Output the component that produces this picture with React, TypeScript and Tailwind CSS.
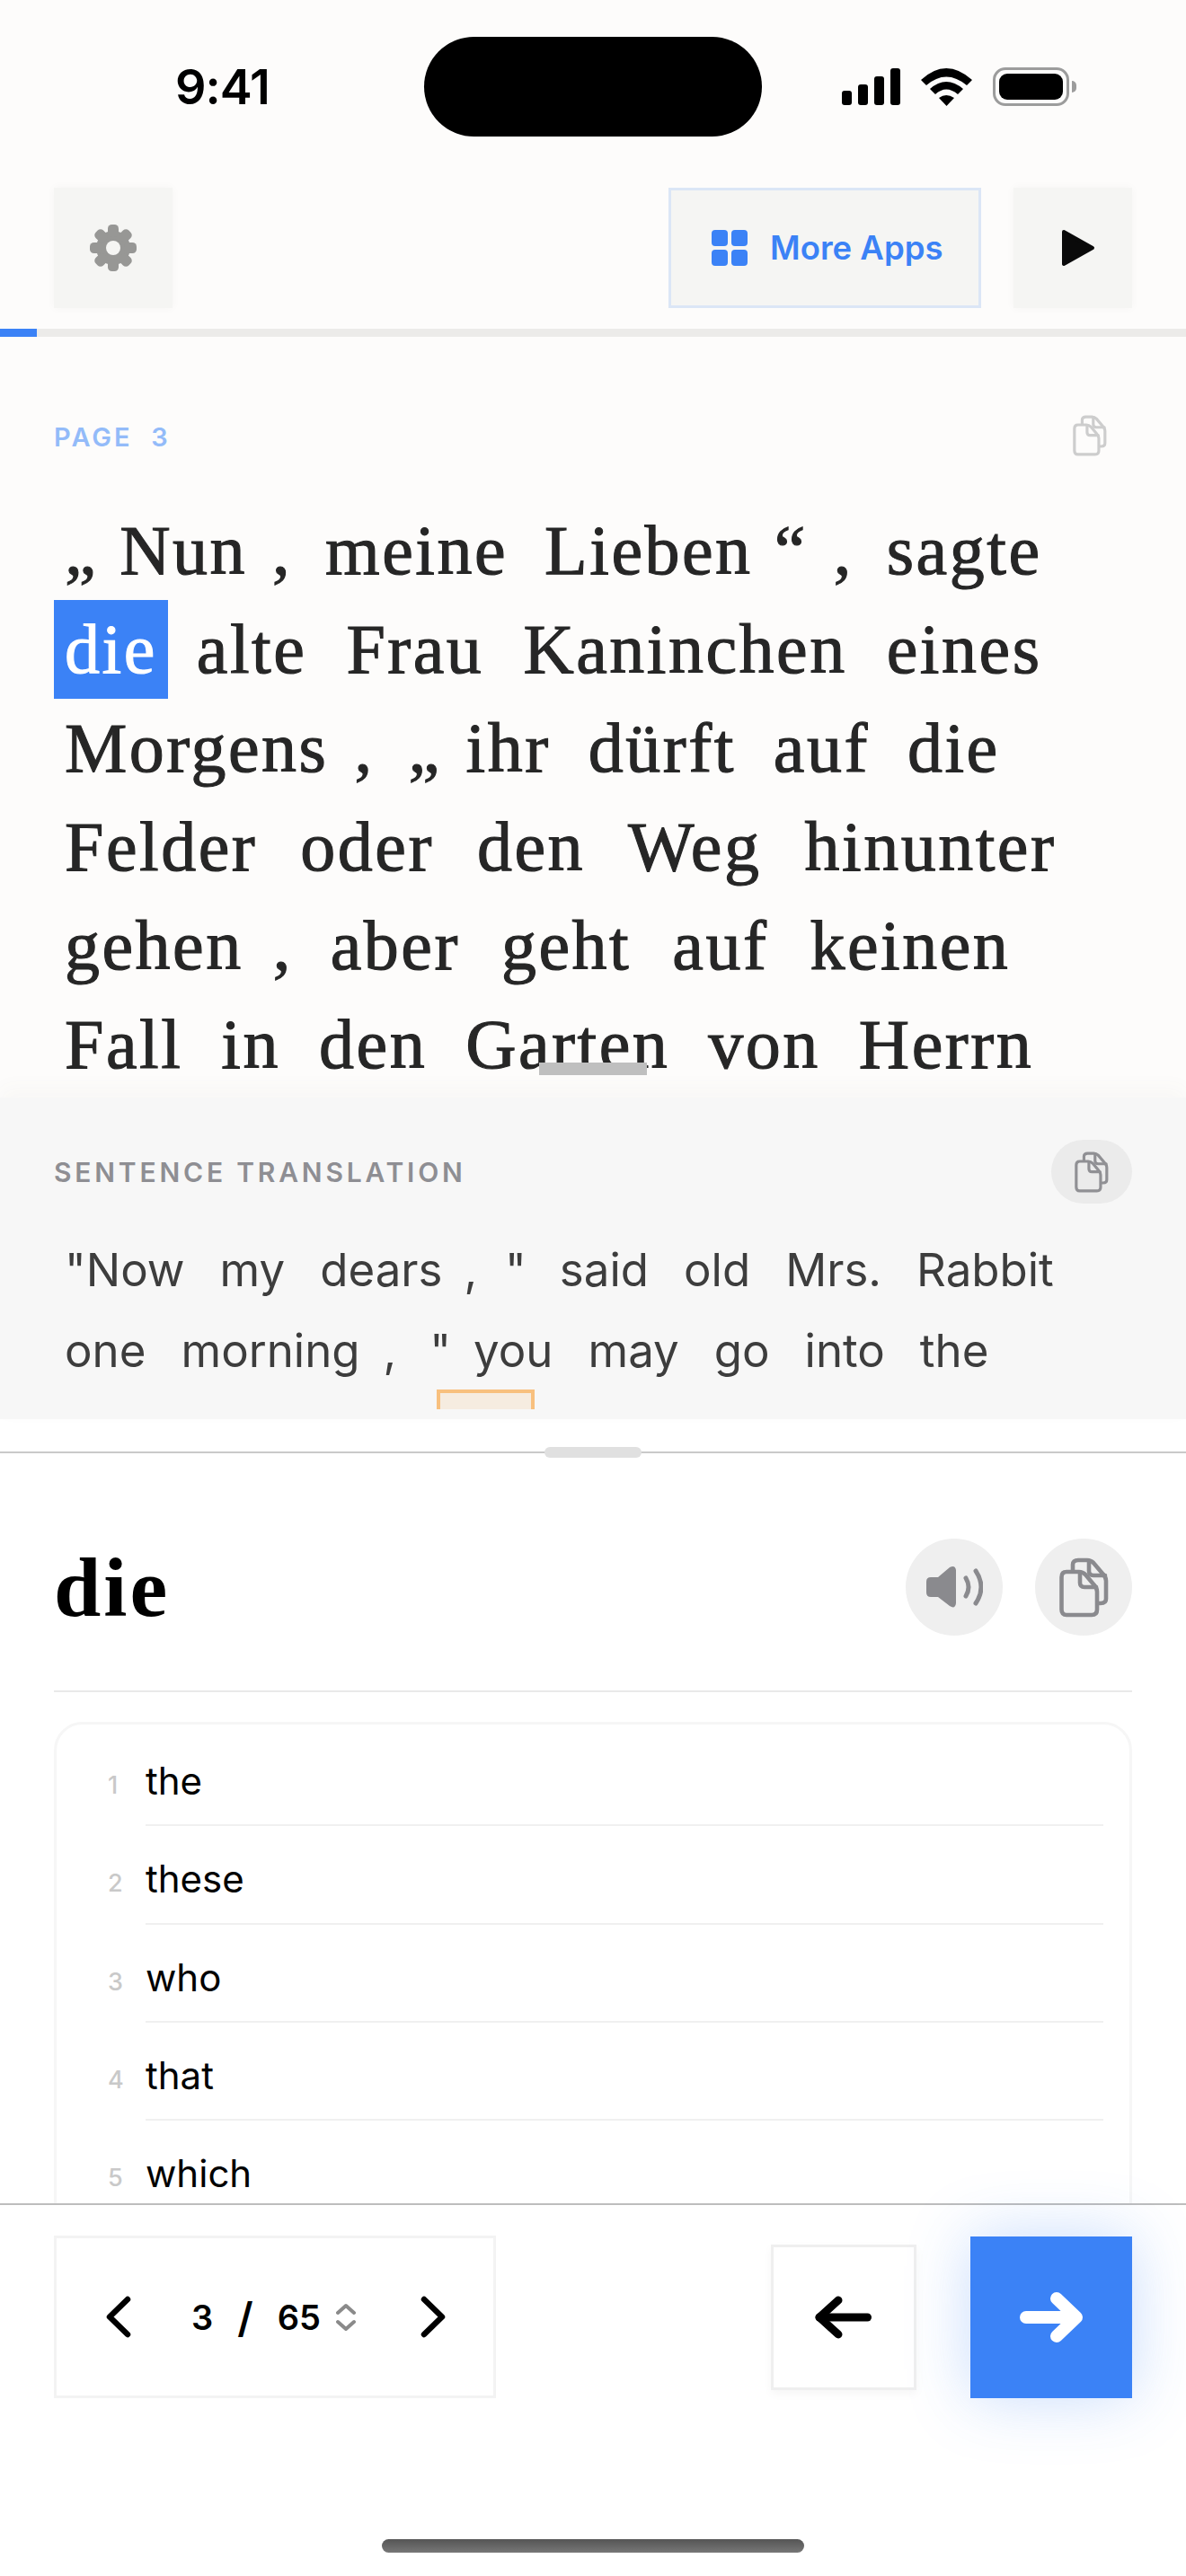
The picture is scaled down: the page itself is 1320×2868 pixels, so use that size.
type Token = { t: string; cls?: string };

const SERIF = 'font-["Liberation_Serif",serif]';
const COMMA = 'ml-[-13px] mr-[-4px]';

const germanLines: Token[][] = [
  [{ t: '„', cls: 'mr-[-17px]' }, { t: 'Nun' }, { t: ',', cls: COMMA }, { t: 'meine' }, { t: 'Lieben' }, { t: '“', cls: 'ml-[-17px] mr-[-12px]' }, { t: ',', cls: 'mr-[-4px]' }, { t: 'sagte' }],
  [{ t: 'die', cls: 'bg-[#3b82f6] text-white' }, { t: 'alte' }, { t: 'Frau' }, { t: 'Kaninchen' }, { t: 'eines' }],
  [{ t: 'Morgens' }, { t: ',', cls: COMMA }, { t: '„', cls: 'mr-[-15px]' }, { t: 'ihr' }, { t: 'dürft' }, { t: 'auf' }, { t: 'die' }],
  [{ t: 'Felder' }, { t: 'oder' }, { t: 'den' }, { t: 'Weg' }, { t: 'hinunter' }],
  [{ t: 'gehen' }, { t: ',', cls: COMMA }, { t: 'aber' }, { t: 'geht' }, { t: 'auf' }, { t: 'keinen' }],
  [{ t: 'Fall' }, { t: 'in' }, { t: 'den' }, { t: 'Garten' }, { t: 'von' }, { t: 'Herrn' }],
];

// word gaps differ per line, the source font is wider in some words
const lineGaps = ['gap-[17px]', 'gap-[20px]', 'gap-[18px]', 'gap-[24px]', 'gap-[22px]', 'gap-[19px]'];

const englishLines: Token[][] = [
  [{ t: '"Now' }, { t: 'my' }, { t: 'dears' }, { t: ',', cls: 'ml-[-15px]' }, { t: '"', cls: 'ml-[-8px]' }, { t: 'said', cls: 'ml-[-2px]' }, { t: 'old' }, { t: 'Mrs.' }, { t: 'Rabbit' }],
  [{ t: 'one' }, { t: 'morning' }, { t: ',', cls: 'ml-[-13px]' }, { t: '"', cls: 'ml-[-2px]' }, { t: 'you', cls: 'ml-[-14px]' }, { t: 'may' }, { t: 'go' }, { t: 'into' }, { t: 'the' }],
];

const meanings = ['the', 'these', 'who', 'that', 'which', 'those'];

function CopyIcon({ className }: { className?: string }) {
  return (
    <svg viewBox="0 0 55 67" fill="none" stroke="currentColor" strokeWidth="4.6" strokeLinejoin="round" strokeLinecap="round" className={className}>
      <path d="M8 16H22Q26 16 29 19L39 31Q42 34 42 38V58Q42 64 36 64H8Q2.5 64 2.5 58V22Q2.5 16 8 16Z" />
      <path d="M23 17V28Q23 33 28 33H41" />
      <path d="M15 15V8Q15 3 21 3H31Q35 3 38 6L49 19Q52 22 52 26V46Q52 51 46 51H43" />
      <path d="M33 4V15Q33 20 38 20H51" />
    </svg>
  );
}

function SpeakerIcon() {
  return (
    <svg viewBox="0 0 63 48" className="w-[63px] h-[48px] text-[#8a8a8e]">
      <path fill="currentColor" d="M5 13H13L26 2Q32-1 33 5V42Q32 49 26 45L13 35H5Q0 35 0 30V18Q0 13 5 13Z" />
      <path fill="none" stroke="currentColor" strokeWidth="5" strokeLinecap="round" d="M44 14Q50 24 44 34" />
      <path fill="none" stroke="currentColor" strokeWidth="5" strokeLinecap="round" d="M55 6Q67 24 55 42" />
    </svg>
  );
}

function GearIcon() {
  return (
    <svg viewBox="0 0 52 52" className="w-[52px] h-[52px]">
      <g fill="#979795">
        <circle cx="26" cy="26" r="19" />
        {[0, 45, 90, 135, 180, 225, 270, 315].map((deg) => (
          <rect key={deg} x="20" y="0" width="12" height="14" rx="4.5" transform={`rotate(${deg} 26 26)`} />
        ))}
      </g>
      <circle cx="26" cy="26" r="8" fill="#f5f5f3" />
    </svg>
  );
}

function StatusBar() {
  return (
    <div className="h-[193px] flex items-center">
      <div className="w-[472px] pl-[195px] font-['Inter',sans-serif] font-semibold text-[54px] leading-none tracking-[-1px] text-black">9:41</div>
      <div className="w-[376px] h-[111px] rounded-full bg-black" />
      <div className="flex items-center pl-[89px]">
        <div className="flex items-end gap-[7px] h-[41px]">
          <div className="w-[11px] h-[16px] rounded-[3px] bg-black" />
          <div className="w-[11px] h-[23px] rounded-[3px] bg-black" />
          <div className="w-[11px] h-[32px] rounded-[3px] bg-black" />
          <div className="w-[11px] h-[41px] rounded-[3px] bg-black" />
        </div>
        <svg viewBox="0 0 57 42" className="w-[57px] h-[42px] ml-[23px]">
          <path d="M0 13Q28-13 57 13L51 19Q28 0 6 19Z" />
          <path d="M10 23Q28 7 47 23L41 29Q28 18 16 29Z" />
          <path d="M20 33Q28 27 37 33L28.5 42Z" />
        </svg>
        <div className="ml-[23px] w-[85px] h-[43px] rounded-[14px] border-[3px] border-[#9c9c9c] p-[4px]">
          <div className="w-full h-full rounded-[9px] bg-black" />
        </div>
        <div className="ml-[3px] w-[5px] h-[13px] rounded-r-full bg-[#9c9c9c]" />
      </div>
    </div>
  );
}

function Toolbar() {
  const soft = 'h-[134px] flex items-center justify-center bg-[#f5f5f3] shadow-[0_0_10px_rgba(0,0,0,0.035)]';
  return (
    <div className="pt-[16px] pb-[23px] px-[60px] flex justify-between">
      <div className={`${soft} w-[132px]`}>
        <GearIcon />
      </div>
      <div className="flex gap-[36px]">
        <div className="w-[348px] h-[134px] flex items-center pl-[45px] gap-[25px] bg-[#f5f5f3] border-[3px] border-[#dbe6f6]">
          <svg viewBox="0 0 40 40" className="w-[40px] h-[40px] text-[#3b82f6]" fill="currentColor">
            <rect x="0" y="0" width="18" height="18" rx="4" />
            <rect x="22" y="0" width="18" height="18" rx="4" />
            <rect x="0" y="22" width="18" height="18" rx="4" />
            <rect x="22" y="22" width="18" height="18" rx="4" />
          </svg>
          <span className="font-['Inter',sans-serif] font-semibold text-[36.5px] leading-none text-[#3b82f6]">More Apps</span>
        </div>
        <div className={`${soft} w-[132px]`}>
          <svg viewBox="0 0 38 42" className="ml-[12px] w-[38px] h-[42px]">
            <path fill="#0a0a0a" stroke="#0a0a0a" strokeWidth="4" strokeLinejoin="round" d="M3 3L35 21L3 39Z" />
          </svg>
        </div>
      </div>
    </div>
  );
}

function Reader() {
  return (
    <div className="relative h-[847px] overflow-hidden px-[60px]">
      <div className="h-[183px] pt-[87px] flex justify-between items-start pr-[28px]">
        <span className="mt-[10px] font-['Inter',sans-serif] font-semibold text-[29px] leading-[29px] tracking-[3px] text-[#93bbf9] whitespace-pre">PAGE  3</span>
        <CopyIcon className="w-[38px] h-[46px] text-[#cdcdcd]" />
      </div>
      {germanLines.map((line, i) => (
        <div key={i} className={`${SERIF} ${lineGaps[i]} flex h-[110px] text-[78px] leading-[110px] tracking-[2.5px] text-[#262626] [-webkit-text-stroke:1.1px_currentColor]`}>
          {line.map((tok, j) => (
            <span key={j} className={`relative px-3 whitespace-pre ${tok.cls ?? ''}`}>
              {tok.t}
              {tok.t === 'Garten' && <span className="absolute left-[94px] bottom-[21px] w-[120px] h-[14px] bg-[#bfbfbf]" />}
            </span>
          ))}
        </div>
      ))}
    </div>
  );
}

function SentencePanel() {
  return (
    <div className="relative h-[358px] bg-[#f7f7f7] shadow-[0_-10px_22px_rgba(120,110,90,0.035)] px-[60px]">
      <div className="pt-[47px] flex justify-between items-center">
        <span className="font-['Inter',sans-serif] font-semibold text-[30px] leading-none tracking-[3.8px] text-[#8e8e93]">SENTENCE TRANSLATION</span>
        <div className="w-[90px] h-[71px] rounded-full bg-[#ebebeb] flex items-center justify-center">
          <CopyIcon className="w-[38px] h-[46px] text-[#909094]" />
        </div>
      </div>
      <div className="mt-[29px]">
        {englishLines.map((line, i) => (
          <div key={i} className="flex gap-[15px] h-[90px] font-['Inter',sans-serif] text-[51px] leading-[90px] text-[#3d3d3d]">
            {line.map((tok, j) => (
              <span key={j} className={`px-3 whitespace-pre ${tok.cls ?? ''}`}>{tok.t}</span>
            ))}
          </div>
        ))}
        <div className="ml-[426px] mt-[-2px] w-[109px] h-[22px] bg-[#f6ece0] border-x-[4px] border-t-[4px] border-[#f8c07e]" />
      </div>
    </div>
  );
}

function WordSheet() {
  return (
    <div className="h-[873px] bg-white overflow-hidden">
      <div className="relative mt-[36px] h-[2px] bg-[#c9c9c9]">
        <div className="absolute left-[606px] top-[-5px] w-[108px] h-[12px] rounded-[6px] bg-[#e0e0e0]" />
      </div>
      <div className="px-[60px]">
        <div className="pt-[95px] pb-[61px] flex items-center justify-between border-b-2 border-[#e9e9e9]">
          <span className={`${SERIF} font-bold text-[94px] leading-[108px] tracking-[3px] text-black`}>die</span>
          <div className="flex gap-[36px]">
            <div className="w-[108px] h-[108px] rounded-full bg-[#efefef] flex items-center justify-center">
              <SpeakerIcon />
            </div>
            <div className="w-[108px] h-[108px] rounded-full bg-[#efefef] flex items-center justify-center">
              <CopyIcon className="w-[55px] h-[67px] text-[#8a8a8e]" />
            </div>
          </div>
        </div>
        <div className="mt-[33px] rounded-[32px] border-[3px] border-[#f6f6f6] pl-[57px] pr-[29px] pt-[4px]">
          {meanings.map((m, i) => (
            <div key={m} className="flex h-[109.25px]">
              <span className="w-[42px] pt-[50px] font-['Inter',sans-serif] font-medium text-[27px] leading-[27px] text-[#c9c9c9]">{i + 1}</span>
              <span className="flex-1 pt-[29px] border-b-2 border-[#f0f0f0] font-['Inter',sans-serif] text-[42px] leading-[60px] text-black">{m}</span>
            </div>
          ))}
        </div>
      </div>
    </div>
  );
}

function BottomBar() {
  return (
    <div className="relative h-[415px] bg-white border-t-2 border-[#bdbdbd]">
      <div className="h-[372px] px-[60px] pt-[34px] flex justify-between items-start">
        <div className="w-[492px] h-[181px] border-[3px] border-[#f3f3f3] flex items-center pl-[55px]">
          <svg viewBox="0 0 28 47" fill="none" stroke="#000" strokeWidth="6.5" strokeLinecap="round" strokeLinejoin="round" className="w-[28px] h-[47px]">
            <path d="M24 4L4 23.5L24 43" />
          </svg>
          <div className="ml-[67px] flex items-center font-['Inter',sans-serif] font-semibold text-[38px] leading-none text-black whitespace-pre">
            <span>3</span>
            <span className="ml-[27px] font-semibold text-[46px]">/</span>
            <span className="ml-[27px]">65</span>
          </div>
          <svg viewBox="0 0 22 32" fill="none" stroke="#8a8a8a" strokeWidth="4" strokeLinecap="round" strokeLinejoin="round" className="ml-[17px] w-[22px] h-[32px]">
            <path d="M2 11L11 3L20 11" />
            <path d="M2 21L11 29L20 21" />
          </svg>
          <svg viewBox="0 0 28 47" fill="none" stroke="#000" strokeWidth="6.5" strokeLinecap="round" strokeLinejoin="round" className="ml-[72px] w-[28px] h-[47px]">
            <path d="M4 4L24 23.5L4 43" />
          </svg>
        </div>
        <div className="flex gap-[60px] items-center h-[181px]">
          <div className="w-[162px] h-[162px] bg-white border-[3px] border-[#efefef] shadow-[0_4px_10px_rgba(0,0,0,0.04)] flex items-center justify-center">
            <svg viewBox="0 0 66 52" fill="none" stroke="#000" strokeWidth="9" strokeLinecap="round" strokeLinejoin="round" className="w-[66px] h-[52px]">
              <path d="M59.5 26H6" />
              <path d="M27 7L6 26L27 45" />
            </svg>
          </div>
          <div className="w-[180px] h-[180px] bg-[#3b82f6] shadow-[0_0_70px_rgba(59,130,246,0.28)] flex items-center justify-center">
            <svg viewBox="0 0 72 60" fill="none" stroke="#fff" strokeWidth="14" strokeLinecap="round" strokeLinejoin="round" className="w-[72px] h-[60px]">
              <path d="M8 30H62" />
              <path d="M42 9L64 30L42 51" />
            </svg>
          </div>
        </div>
      </div>
      <div className="mx-auto w-[470px] h-[15px] rounded-full bg-gradient-to-b from-[#555555] to-[#777777]" />
    </div>
  );
}

export default function App() {
  return (
    <div className="w-[1320px] h-[2868px] overflow-hidden bg-[#fdfcfb]">
      <StatusBar />
      <Toolbar />
      <div className="h-[9px] bg-[#ecebe9]">
        <div className="w-[41px] h-full bg-[#3b82f6]" />
      </div>
      <Reader />
      <SentencePanel />
      <WordSheet />
      <BottomBar />
    </div>
  );
}
